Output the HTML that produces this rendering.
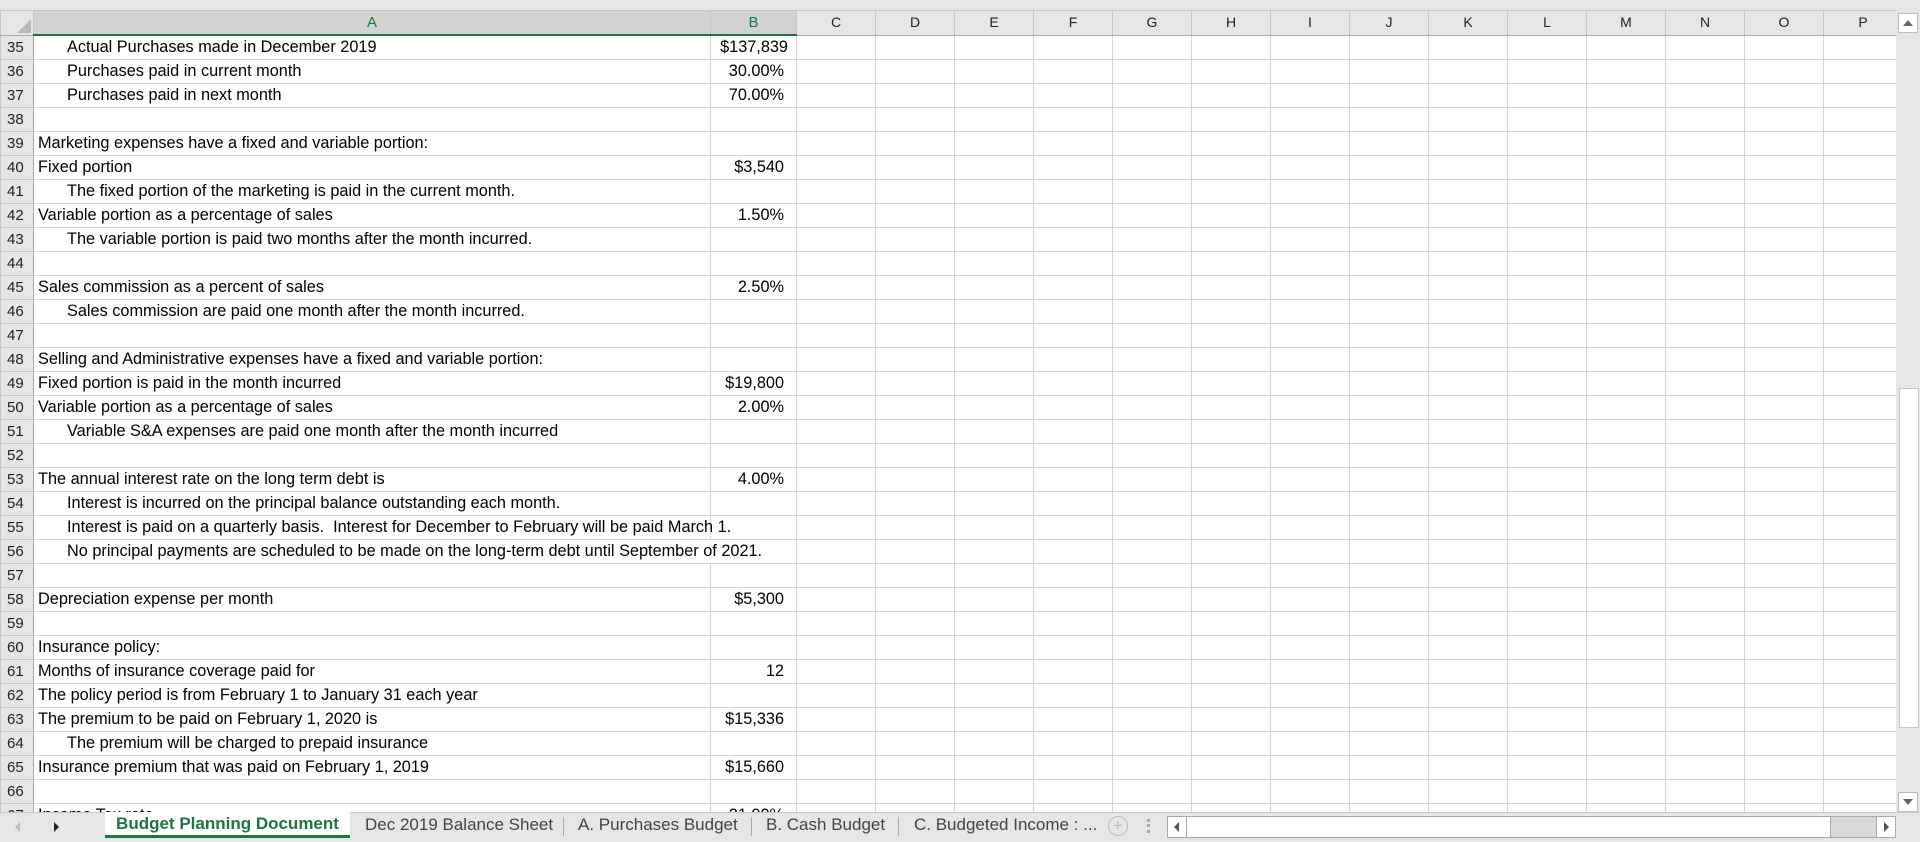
<!DOCTYPE html>
<html><head><meta charset="utf-8"><style>
html,body{margin:0;padding:0;width:1920px;height:839px;overflow:hidden;background:#e6e6e6;font-family:"Liberation Sans",Arial,sans-serif}
#wrap{position:absolute;left:0;top:10px;width:1896px;height:802px;overflow:hidden;background:#fff}
table{border-collapse:collapse;table-layout:fixed;position:absolute;left:0;top:0;width:1902px}
td{height:23px;border:1px solid #d4d4d4;padding:0 4px;font-size:16.3px;color:#000;white-space:nowrap;overflow:visible;line-height:23px}
tr.h td{height:21px;background:#e6e6e6;border-color:#c6c6c6;text-align:center;font-size:14px;color:#222;border-bottom:1px solid #ababab}
tr.h td.s{background:#d2d2d2;color:#217346;border-bottom:2px solid #217346;font-size:15px}
td.r{background:#e6e6e6;border-color:#c6c6c6;color:#222;text-align:left;padding:0 0 0 6px;font-size:15px;border-right:1px solid #ababab}
td.b{text-align:right;padding-right:12px}
.i{padding-left:33px}
#vs{position:absolute;left:1896px;top:10px;width:24px;height:802px;background:#e6e6e6}
#tabs{position:absolute;left:0;top:812px;width:1920px;height:27px;background:#e6e6e6;border-top:1px solid #c6c6c6;font-size:17px}
.tab{position:absolute;top:0;height:26px;line-height:24px;color:#444}
</style></head><body>
<div id="wrap"><table>
<colgroup><col style="width:33px"><col style="width:677px"><col style="width:86px"><col span="14" style="width:79px"></colgroup>
<tr class="h"><td style="background:#e6e6e6;position:relative"><svg style="position:absolute;right:2px;bottom:2px" width="14" height="14"><polygon points="14,0 14,14 0,14" fill="#b8b8b8"/></svg></td><td class="s">A</td><td class="s">B</td><td>C</td><td>D</td><td>E</td><td>F</td><td>G</td><td>H</td><td>I</td><td>J</td><td>K</td><td>L</td><td>M</td><td>N</td><td>O</td><td>P</td></tr>
<tr><td class="r">35</td><td class="i">Actual Purchases made in December 2019</td><td class="b" style="padding-right:8px">$137,839</td><td></td><td></td><td></td><td></td><td></td><td></td><td></td><td></td><td></td><td></td><td></td><td></td><td></td><td></td></tr>
<tr><td class="r">36</td><td class="i">Purchases paid in current month</td><td class="b">30.00%</td><td></td><td></td><td></td><td></td><td></td><td></td><td></td><td></td><td></td><td></td><td></td><td></td><td></td><td></td></tr>
<tr><td class="r">37</td><td class="i">Purchases paid in next month</td><td class="b">70.00%</td><td></td><td></td><td></td><td></td><td></td><td></td><td></td><td></td><td></td><td></td><td></td><td></td><td></td><td></td></tr>
<tr><td class="r">38</td><td></td><td></td><td></td><td></td><td></td><td></td><td></td><td></td><td></td><td></td><td></td><td></td><td></td><td></td><td></td><td></td></tr>
<tr><td class="r">39</td><td>Marketing expenses have a fixed and variable portion:</td><td></td><td></td><td></td><td></td><td></td><td></td><td></td><td></td><td></td><td></td><td></td><td></td><td></td><td></td><td></td></tr>
<tr><td class="r">40</td><td>Fixed portion</td><td class="b">$3,540</td><td></td><td></td><td></td><td></td><td></td><td></td><td></td><td></td><td></td><td></td><td></td><td></td><td></td><td></td></tr>
<tr><td class="r">41</td><td class="i">The fixed portion of the marketing is paid in the current month.</td><td></td><td></td><td></td><td></td><td></td><td></td><td></td><td></td><td></td><td></td><td></td><td></td><td></td><td></td><td></td></tr>
<tr><td class="r">42</td><td>Variable portion as a percentage of sales</td><td class="b">1.50%</td><td></td><td></td><td></td><td></td><td></td><td></td><td></td><td></td><td></td><td></td><td></td><td></td><td></td><td></td></tr>
<tr><td class="r">43</td><td class="i">The variable portion is paid two months after the month incurred.</td><td></td><td></td><td></td><td></td><td></td><td></td><td></td><td></td><td></td><td></td><td></td><td></td><td></td><td></td><td></td></tr>
<tr><td class="r">44</td><td></td><td></td><td></td><td></td><td></td><td></td><td></td><td></td><td></td><td></td><td></td><td></td><td></td><td></td><td></td><td></td></tr>
<tr><td class="r">45</td><td>Sales commission as a percent of sales</td><td class="b">2.50%</td><td></td><td></td><td></td><td></td><td></td><td></td><td></td><td></td><td></td><td></td><td></td><td></td><td></td><td></td></tr>
<tr><td class="r">46</td><td class="i">Sales commission are paid one month after the month incurred.</td><td></td><td></td><td></td><td></td><td></td><td></td><td></td><td></td><td></td><td></td><td></td><td></td><td></td><td></td><td></td></tr>
<tr><td class="r">47</td><td></td><td></td><td></td><td></td><td></td><td></td><td></td><td></td><td></td><td></td><td></td><td></td><td></td><td></td><td></td><td></td></tr>
<tr><td class="r">48</td><td>Selling and Administrative expenses have a fixed and variable portion:</td><td></td><td></td><td></td><td></td><td></td><td></td><td></td><td></td><td></td><td></td><td></td><td></td><td></td><td></td><td></td></tr>
<tr><td class="r">49</td><td>Fixed portion is paid in the month incurred</td><td class="b">$19,800</td><td></td><td></td><td></td><td></td><td></td><td></td><td></td><td></td><td></td><td></td><td></td><td></td><td></td><td></td></tr>
<tr><td class="r">50</td><td>Variable portion as a percentage of sales</td><td class="b">2.00%</td><td></td><td></td><td></td><td></td><td></td><td></td><td></td><td></td><td></td><td></td><td></td><td></td><td></td><td></td></tr>
<tr><td class="r">51</td><td class="i">Variable S&amp;A expenses are paid one month after the month incurred</td><td></td><td></td><td></td><td></td><td></td><td></td><td></td><td></td><td></td><td></td><td></td><td></td><td></td><td></td><td></td></tr>
<tr><td class="r">52</td><td></td><td></td><td></td><td></td><td></td><td></td><td></td><td></td><td></td><td></td><td></td><td></td><td></td><td></td><td></td><td></td></tr>
<tr><td class="r">53</td><td>The annual interest rate on the long term debt is</td><td class="b">4.00%</td><td></td><td></td><td></td><td></td><td></td><td></td><td></td><td></td><td></td><td></td><td></td><td></td><td></td><td></td></tr>
<tr><td class="r">54</td><td class="i">Interest is incurred on the principal balance outstanding each month.</td><td></td><td></td><td></td><td></td><td></td><td></td><td></td><td></td><td></td><td></td><td></td><td></td><td></td><td></td><td></td></tr>
<tr><td class="r">55</td><td class="i">Interest is paid on a quarterly basis.&nbsp; Interest for December to February will be paid March 1.</td><td></td><td></td><td></td><td></td><td></td><td></td><td></td><td></td><td></td><td></td><td></td><td></td><td></td><td></td><td></td></tr>
<tr><td class="r">56</td><td class="i" style="overflow:visible;position:relative"><span style="position:absolute;left:33px;top:0;background:#fff">No principal payments are scheduled to be made on the long-term debt until September of 2021.</span></td><td style="border-left-color:#fff"></td><td></td><td></td><td></td><td></td><td></td><td></td><td></td><td></td><td></td><td></td><td></td><td></td><td></td><td></td></tr>
<tr><td class="r">57</td><td></td><td></td><td></td><td></td><td></td><td></td><td></td><td></td><td></td><td></td><td></td><td></td><td></td><td></td><td></td><td></td></tr>
<tr><td class="r">58</td><td>Depreciation expense per month</td><td class="b">$5,300</td><td></td><td></td><td></td><td></td><td></td><td></td><td></td><td></td><td></td><td></td><td></td><td></td><td></td><td></td></tr>
<tr><td class="r">59</td><td></td><td></td><td></td><td></td><td></td><td></td><td></td><td></td><td></td><td></td><td></td><td></td><td></td><td></td><td></td><td></td></tr>
<tr><td class="r">60</td><td>Insurance policy:</td><td></td><td></td><td></td><td></td><td></td><td></td><td></td><td></td><td></td><td></td><td></td><td></td><td></td><td></td><td></td></tr>
<tr><td class="r">61</td><td>Months of insurance coverage paid for</td><td class="b">12</td><td></td><td></td><td></td><td></td><td></td><td></td><td></td><td></td><td></td><td></td><td></td><td></td><td></td><td></td></tr>
<tr><td class="r">62</td><td>The policy period is from February 1 to January 31 each year</td><td></td><td></td><td></td><td></td><td></td><td></td><td></td><td></td><td></td><td></td><td></td><td></td><td></td><td></td><td></td></tr>
<tr><td class="r">63</td><td>The premium to be paid on February 1, 2020 is</td><td class="b">$15,336</td><td></td><td></td><td></td><td></td><td></td><td></td><td></td><td></td><td></td><td></td><td></td><td></td><td></td><td></td></tr>
<tr><td class="r">64</td><td class="i">The premium will be charged to prepaid insurance</td><td></td><td></td><td></td><td></td><td></td><td></td><td></td><td></td><td></td><td></td><td></td><td></td><td></td><td></td><td></td></tr>
<tr><td class="r">65</td><td>Insurance premium that was paid on February 1, 2019</td><td class="b">$15,660</td><td></td><td></td><td></td><td></td><td></td><td></td><td></td><td></td><td></td><td></td><td></td><td></td><td></td><td></td></tr>
<tr><td class="r">66</td><td></td><td></td><td></td><td></td><td></td><td></td><td></td><td></td><td></td><td></td><td></td><td></td><td></td><td></td><td></td><td></td></tr>
<tr><td class="r">67</td><td>Income Tax rate</td><td class="b">21.00%</td><td></td><td></td><td></td><td></td><td></td><td></td><td></td><td></td><td></td><td></td><td></td><td></td><td></td><td></td></tr>
</table></div>
<div id="vs">
<div style="position:absolute;left:2px;top:3px;width:18px;height:18px;background:#fff;border:1px solid #bbb"><svg width="18" height="18"><polygon points="4,12 14,12 9,6" fill="#666"/></svg></div>
<div style="position:absolute;left:3px;top:378px;width:18px;height:338px;background:#fff;border:1px solid #c6c6c6"></div>
<div style="position:absolute;left:2px;top:782px;width:18px;height:18px;background:#fff;border:1px solid #bbb"><svg width="18" height="18"><polygon points="4,6 14,6 9,12" fill="#666"/></svg></div>
</div>
<div id="tabs">
<svg style="position:absolute;left:12px;top:8px" width="50" height="12"><polygon points="8,1 8,11 3,6" fill="#bbb"/><polygon points="42,1 42,11 47,6" fill="#222"/></svg>
<div class="tab" style="left:105px;width:245px;background:#fff;color:#217346;font-weight:bold;text-align:center;border-bottom:3px solid #217346;height:23px;top:-1px">Budget Planning Document</div>
<div class="tab" style="left:365px">Dec 2019 Balance Sheet</div>
<div style="position:absolute;left:563px;top:4px;width:1px;height:19px;background:#aaa"></div>
<div class="tab" style="left:578px">A. Purchases Budget</div>
<div style="position:absolute;left:751px;top:4px;width:1px;height:19px;background:#aaa"></div>
<div class="tab" style="left:766px">B. Cash Budget</div>
<div style="position:absolute;left:898px;top:4px;width:1px;height:19px;background:#aaa"></div>
<div class="tab" style="left:914px">C. Budgeted Income : ...</div>
<div style="position:absolute;left:1108px;top:3px;width:18px;height:18px;border:1px solid #bbb;border-radius:50%;color:#bbb;text-align:center;line-height:18px;font-size:17px">+</div>
<div style="position:absolute;left:1147px;top:6px;width:3px;height:14px;border-left:3px dotted #aaa"></div>
<div style="position:absolute;left:1167px;top:3px;width:727px;height:20px;background:#d8d8d8;border:1px solid #aaa">
<div style="position:absolute;left:0;top:0;width:18px;height:20px;background:#fff;border-right:1px solid #aaa"><svg width="18" height="20"><polygon points="11,5 11,15 6,10" fill="#555"/></svg></div>
<div style="position:absolute;left:19px;top:0;width:643px;height:20px;background:#fff;border-right:1px solid #aaa"></div>
<div style="position:absolute;right:0;top:0;width:18px;height:20px;background:#fff;border-left:1px solid #aaa"><svg width="18" height="20"><polygon points="7,5 7,15 12,10" fill="#555"/></svg></div>
</div>
</div>
</body></html>
